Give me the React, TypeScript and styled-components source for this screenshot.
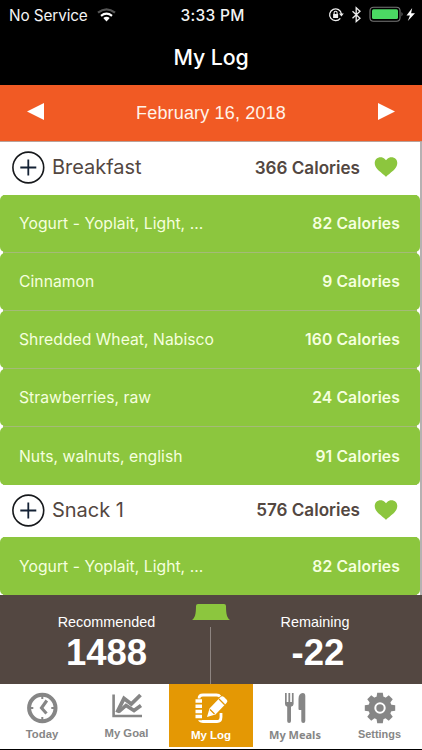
import React from "react";
import styled, { createGlobalStyle } from "styled-components";

const GREEN = "#8cc63e";
const BROWN = "#534741";
const GREY = "#868686";

const GlobalStyle = createGlobalStyle`
  * { box-sizing: border-box; }
  body { margin: 0; background: #000; overflow: hidden; }
`;

const Screen = styled.main`
  width: 422px;
  height: 750px;
  display: flex;
  flex-direction: column;
  background: #000;
  font-family: Inter, sans-serif;
  overflow: hidden;
  white-space: nowrap;
`;

const StatusBar = styled.div`
  height: 30px;
  flex: none;
  display: grid;
  grid-template-columns: 1fr auto 1fr;
  align-items: center;
  padding: 0 6px 0 9px;
  color: #f4f4f4;
`;

const Carrier = styled.div`
  display: flex;
  align-items: center;
  gap: 9px;
  font-size: 15.3px;
  letter-spacing: -0.1px;
`;

const Time = styled.div`
  font-size: 15.5px;
  font-weight: 500;
  letter-spacing: 0.3px;
`;

const Indicators = styled.div`
  display: flex;
  align-items: center;
  justify-content: flex-end;
`;

const Title = styled.h1`
  height: 55px;
  flex: none;
  margin: 0;
  text-align: center;
  color: #fff;
  font-size: 21.3px;
  line-height: 54px;
  font-weight: 550;
  letter-spacing: -0.1px;
`;

const DateBar = styled.div`
  height: 57px;
  flex: none;
  display: flex;
  align-items: center;
  justify-content: space-between;
  padding: 0 27px;
  background: #f15a24;
  border-bottom: 1px solid #b8a199;
  color: #fff3e9;
  font: 18px "Liberation Sans", sans-serif;
`;

const DateText = styled.span`
  letter-spacing: 0.16px;
`;

const Arrow = styled.svg`
  width: 17px;
  height: 17px;
  margin-bottom: 4px;
  fill: #fff;
`;

const Log = styled.section`
  height: 453px;
  flex: none;
  overflow: hidden;
  background: #fff;
  border-right: 2px solid #b5b1b2;
`;

const MealHeader = styled.div`
  height: 52.5px;
  display: flex;
  align-items: center;
  padding: 0 22px 2px 12px;
  color: ${BROWN};
`;

const MealName = styled.span`
  flex: 1;
  margin-left: 7px;
  font-size: 20px;
  letter-spacing: -0.02px;
`;

const MealTotal = styled.span`
  margin-right: 14px;
  font-size: 17.1px;
  font-weight: 600;
`;

const Foods = styled.div`
  display: flex;
  flex-direction: column;
  gap: 1px;
  background: linear-gradient(90deg, #fff 3px, #a4ba78 3px, #a4ba78 417px, #fff 417px);
`;

const FoodRow = styled.div`
  height: 57px;
  display: flex;
  align-items: center;
  justify-content: space-between;
  padding: 1px 20px 0 19px;
  border-radius: 5px;
  background: ${GREEN};
  color: #f5ffdf;
  font-size: 15.7px;
  &:last-child { height: 58px; }
`;

const FoodName = styled.span`
  letter-spacing: 0.04px;
`;

const FoodCalories = styled.span`
  font-weight: 600;
  letter-spacing: 0.12px;
`;

const Summary = styled.section`
  height: 89px;
  flex: none;
  display: grid;
  grid-template-columns: 191px 40px 191px;
  background: ${BROWN};
  color: #fff;
  text-align: center;
  font-family: "Liberation Sans", sans-serif;
`;

const Stat = styled.div<{ $side: "left" | "right" }>`
  display: flex;
  flex-direction: column;
  align-items: center;
  padding-top: 19px;
  ${(p) => (p.$side === "left" ? "padding-left: 22px;" : "padding-right: 23px;")}

  strong { ${(p) => (p.$side === "left" ? "margin-left: 0;" : "margin-left: 6px;")} }
`;

const StatLabel = styled.span`
  font-size: 14.4px;
  line-height: 17px;
`;

const StatValue = styled.strong`
  font-size: 36.5px;
  line-height: 43px;
`;

const Divider = styled.div`
  display: flex;
  flex-direction: column;
  align-items: center;
  padding-top: 9px;
  &::after {
    content: "";
    width: 1px;
    height: 57px;
    margin-top: 7px;
    margin-right: 1px;
    background: #8e8581;
  }
`;

const Tabs = styled.nav`
  height: 65px;
  flex: none;
  display: grid;
  grid-template-columns: 84px 85px 84px 84px 85px;
  background: #fff;
`;

const Tab = styled.button<{ $active?: boolean; $drop: number; $font?: string; $size?: number }>`
  height: ${(p) => (p.$active ? 63 : 65)}px;
  display: flex;
  flex-direction: column;
  align-items: center;
  padding: 0;
  border: 0;
  background: ${(p) => (p.$active ? "#e49804" : "transparent")};
  color: ${(p) => (p.$active ? "#fff" : GREY)};
  font: bold ${(p) => p.$size ?? 11.3}px/14px ${(p) => p.$font ?? '"Liberation Sans"'}, sans-serif;

  svg { flex: none; width: 36px; height: 36px; margin: 6px 0 ${(p) => p.$drop}px; }
`;

const foods = [
  ["Yogurt - Yoplait, Light, ...", 82],
  ["Cinnamon", 9],
  ["Shredded Wheat, Nabisco", 160],
  ["Strawberries, raw", 24],
  ["Nuts, walnuts, english", 91],
] as const;

const PlusIcon = () => (
  <svg width="33" height="34" viewBox="0 0 33 34" fill="none">
    <circle cx="16.3" cy="17.5" r="15.4" stroke="#17191c" strokeWidth="1.6" />
    <path d="M8.3 17.5h16M16.3 9.500v16" stroke="#142235" strokeWidth="1.8" />
  </svg>
);

const HeartIcon = () => (
  <svg width="24" height="20" viewBox="0 0 24 20">
    <path d="M12 19.800C10.600 18.200 6 15 3.200 12C.2 8.700 .1 4.600 2 2.300C4.500-.3 8.500-.3 10.800 1.900L12 3.200L13.200 1.900C15.500-.3 19.500-.3 22 2.300C23.900 4.600 23.800 8.700 20.800 12C18 15 13.400 18.200 12 19.800Z" fill={GREEN} />
  </svg>
);

const Meal = ({ name, total, items }: { name: string; total: number; items: readonly (readonly [string, number])[] }) => (
  <>
    <MealHeader>
      <PlusIcon />
      <MealName>{name}</MealName>
      <MealTotal>{total} Calories</MealTotal>
      <HeartIcon />
    </MealHeader>
    <Foods>
      {items.map(([food, calories]) => (
        <FoodRow key={food}>
          <FoodName>{food}</FoodName>
          <FoodCalories>{calories} Calories</FoodCalories>
        </FoodRow>
      ))}
    </Foods>
  </>
);

const WifiIcon = () => (
  <svg width="19" height="14" viewBox="0 0 19 14" fill="none">
    <path d="M1 4.700Q9.500-2 18 4.700" stroke="#555" strokeWidth="2.300" />
    <path d="M4 7.800Q9.500 3.400 15 7.800" stroke="#fff" strokeWidth="2.200" />
    <path d="M6.300 10.100Q9.500 7.500 12.700 10.100L9.500 13.500Z" fill="#fff" />
  </svg>
);

const StatusIcons = () => (
  <svg width="88" height="18" viewBox="0 0 88 18" fill="none">
    <path d="M12.300 12.300A5.900 5.900 0 1 1 13.400 8" stroke="#eee" strokeWidth="1.300" />
    <path d="M11 7.600h4.800L13.400 10.600Z" fill="#eee" />
    <rect x="5.100" y="8" width="5" height="4" fill="#eee" />
    <path d="M6.100 8V6.700a1.500 1.500 0 0 1 3 0V8" stroke="#eee" strokeWidth="1.100" />
    <path d="M24.500 5.200L32 12.200L28.200 15.500V1.800L32 5.200L24.500 12.200" stroke="#eee" strokeWidth="1.300" />
    <rect x="42" y="1.200" width="30" height="14" rx="3.500" stroke="#777" strokeWidth="1.100" />
    <rect x="44" y="3.300" width="26" height="9.800" rx="1.500" fill="#4bd963" />
    <path d="M73.500 6q2.200 2.200 0 4.500Z" fill="#777" />
    <path d="M84.200 2L78.500 9.400H82L79.800 15L87 7.200H83.100Z" fill="#fff" />
  </svg>
);

const ClockIcon = () => (
  <svg viewBox="0 0 36 36" fill="none" stroke={GREY}>
    <circle cx="18.3" cy="18" r="13.200" strokeWidth="4" />
    <path d="M18.300 6v3M18.300 27v3M6.300 18h3M27.300 18h3" strokeWidth="2" />
    <path d="M22.800 10.500L17.500 18L22.500 23.500" strokeWidth="3.100" />
  </svg>
);

const ChartIcon = () => (
  <svg viewBox="0 0 36 36" fill="none" stroke={GREY}>
    <path d="M4.600 4.500V26H33" strokeWidth="2.600" />
    <path d="M8 22.500L15 8.500L22.300 14L31.500 5" strokeWidth="3.800" />
    <path d="M9.500 22L17 15.500L25 20.500L32 15.500" strokeWidth="3.600" />
  </svg>
);

const NotebookIcon = () => (
  <svg viewBox="0 0 36 36" fill="none" stroke="#fff">
    <path d="M27 6.500Q26 5 23.500 5H10Q6 5 6 9V27Q6 31.500 10 31.500H24Q28 31.500 28 27V23" strokeWidth="2.800" />
    <path d="M3 11.500H9M3 17H9M3 22.300H9M3 27.300H9" stroke="#e49804" strokeWidth="6" />
    <path d="M2.500 11H9M2.500 16.200H9M2.500 21.400H9M2.500 26.600H9" strokeWidth="3.500" />
    <path d="M14 27L16.500 18.500L27.500 7Q29 5.500 31 7L34 10Q35 11.500 33.500 13L22.500 24.500Z" fill="#fff" stroke="none" />
    <path d="M26 9L31.700 14.700M17 19.500L21.500 24" stroke="#e49804" strokeWidth="1.300" />
  </svg>
);

const MealsIcon = () => (
  <svg viewBox="0 0 36 36" fill={GREY}>
    <path d="M8 3h1.700v9h1.700V3h1.800v9h1.700V3h1.700v11q0 2-2.600 2.800V31q0 2-1.900 2T10.200 31V16.800Q8 16 8 14Z" />
    <path d="M21.500 9Q21.500 3.500 25.800 3Q28.300 3 28.300 6V31q0 2-2 2t-2-2V20h-1.800q-1 0-1-1Z" />
  </svg>
);

const GearIcon = () => (
  <svg viewBox="0 0 36 36">
    <circle cx="18" cy="18" r="8.700" fill="none" stroke={GREY} strokeWidth="6" />
    {[0, 45, 90, 135, 180, 225, 270, 315].map((angle) => (
      <path key={angle} d="M14.400 8L15.200 2.800H20.800L21.600 8Z" fill={GREY} transform={`rotate(${angle} 18 18)`} />
    ))}
    <circle cx="18" cy="18" r="3.700" fill={GREY} />
  </svg>
);

export default function App() {
  return (
    <Screen>
      <GlobalStyle />
      <StatusBar>
        <Carrier>No Service <WifiIcon /></Carrier>
        <Time>3:33 PM</Time>
        <Indicators><StatusIcons /></Indicators>
      </StatusBar>
      <Title>My Log</Title>
      <DateBar>
        <Arrow viewBox="0 0 17 17"><path d="M0 8.500L17 0V17Z" /></Arrow>
        <DateText>February 16, 2018</DateText>
        <Arrow viewBox="0 0 17 17"><path d="M0 0L17 8.500L0 17Z" /></Arrow>
      </DateBar>
      <Log>
        <Meal name="Breakfast" total={366} items={foods} />
        <Meal name="Snack 1" total={576} items={foods.slice(0, 1)} />
      </Log>
      <Summary>
        <Stat $side="left"><StatLabel>Recommended</StatLabel><StatValue>1488</StatValue></Stat>
        <Divider>
          <svg width="40" height="16" viewBox="0 0 40 16"><path d="M5 2Q5 0 7 0H33Q35 0 35 2C35 10 36 14 39 16H1C4 14 5 10 5 2Z" fill={GREEN} /></svg>
        </Divider>
        <Stat $side="right"><StatLabel>Remaining</StatLabel><StatValue>-22</StatValue></Stat>
      </Summary>
      <Tabs>
        <Tab $drop={1}><ClockIcon />Today</Tab>
        <Tab $drop={0}><ChartIcon />My Goal</Tab>
        <Tab $active $drop={2} $size={11.5}><NotebookIcon />My Log</Tab>
        <Tab $drop={2} $font='"Noto Sans"' $size={11}><MealsIcon />My Meals</Tab>
        <Tab $drop={1} $size={10.9}><GearIcon />Settings</Tab>
      </Tabs>
    </Screen>
  );
}
